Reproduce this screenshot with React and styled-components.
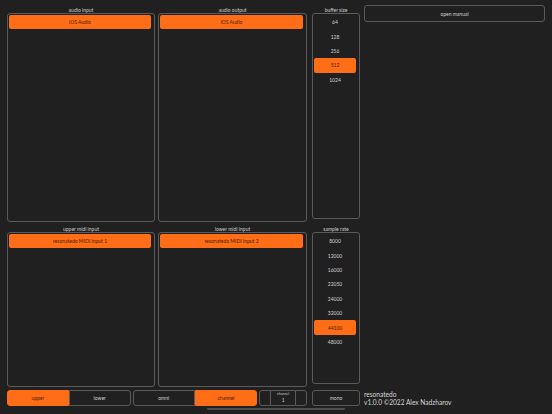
import React from 'react';
import styled, { createGlobalStyle } from 'styled-components';

const GlobalStyle = createGlobalStyle`
  html, body {
    margin: 0;
    padding: 0;
    background: #202020;
  }
  body {
    font-family: Lato, "Open Sans", sans-serif;
    color: #c9c9c9;
  }
`;

const ORANGE = '#ff6d17';
const LINE = '#5b5b5b';

// columns: audio in | gap | audio out | gap | buffer/sample | gap | side
const Screen = styled.div`
  position: relative;
  width: 552px;
  height: 414px;
  overflow: hidden;
  box-sizing: border-box;
  padding: 6px 7px 0 7px;
  display: grid;
  grid-template-columns: 148px 3px 149px 5px 48px 4px 181px;
  grid-template-rows: 216px 162px 16px;
  row-gap: 3px;
  background: #202020;
`;

const Panel = styled.div`
  grid-column: ${p => p.$col};
  display: flex;
  flex-direction: column;
  min-height: 0;
  padding-bottom: ${p => (p.$short ? '3px' : '0')};
`;

const Label = styled.div`
  height: 7px;
  line-height: 8px;
  font-size: 5px;
  text-align: center;
  color: #cfcfcf;
`;

const Box = styled.div`
  flex: 1;
  border: 1px solid ${LINE};
  border-radius: 3px;
  padding: 1px 3px 1px 1px;
  display: flex;
  flex-direction: column;
`;

const Item = styled.div`
  height: ${p => (p.$tall ? '14px' : '14.4px')};
  flex-shrink: 0;
  display: flex;
  align-items: center;
  justify-content: center;
  font-size: 5px;
  border-radius: 2px;
  background: ${p => (p.$active ? ORANGE : 'transparent')};
  color: ${p => (p.$active ? '#4a2308' : '#d0d0d0')};
`;

const SideColumn = styled.div`
  grid-row: 1 / 3;
  grid-column: 7;
`;

const OutlineButton = styled.div`
  box-sizing: border-box;
  height: ${p => p.$h || '16px'};
  border: 1px solid ${LINE};
  border-radius: 3px;
  display: flex;
  align-items: center;
  justify-content: center;
  font-size: 5px;
  color: #d0d0d0;
`;

const ManualButton = styled(OutlineButton)`
  margin-top: -1px;
`;

const MonoButton = styled(OutlineButton)`
  grid-column: 5;
`;

const BottomBar = styled.div`
  grid-column: 1 / 4;
  display: flex;
  gap: 2px;
`;

const Segmented = styled.div`
  width: ${p => p.$w}px;
  display: flex;
`;

const Segment = styled.div`
  flex: 1;
  box-sizing: border-box;
  display: flex;
  align-items: center;
  justify-content: center;
  font-size: 5px;
  border: 1px solid ${p => (p.$active ? ORANGE : LINE)};
  background: ${p => (p.$active ? ORANGE : 'transparent')};
  color: ${p => (p.$active ? '#4a2308' : '#d0d0d0')};
  &:first-child {
    border-radius: 3px 0 0 3px;
  }
  &:last-child {
    border-radius: 0 3px 3px 0;
  }
`;

const Stepper = styled.div`
  width: 48px;
  display: flex;
`;

const StepButton = styled.div`
  width: 12px;
  box-sizing: border-box;
  border: 1px solid ${LINE};
  border-radius: ${p => (p.$side === 'left' ? '3px 0 0 3px' : '0 3px 3px 0')};
`;

const StepValue = styled.div`
  flex: 1;
  box-sizing: border-box;
  border-top: 1px solid ${LINE};
  border-bottom: 1px solid ${LINE};
  display: flex;
  flex-direction: column;
  align-items: center;
  justify-content: center;
  gap: 2px;
  color: #d0d0d0;
`;

const Tiny = styled.span`
  font-size: 3.5px;
  line-height: 3px;
`;

const Value = styled.span`
  font-size: 5px;
  line-height: 5px;
`;

const Credits = styled.div`
  grid-column: 7;
  font-family: Lato, sans-serif;
  font-size: 6.6px;
  line-height: 8px;
  color: #d6d6d6;
  display: flex;
  flex-direction: column;
  justify-content: center;
`;

const HomeIndicator = styled.div`
  position: absolute;
  left: 207px;
  bottom: 4px;
  width: 138px;
  height: 2px;
  border-radius: 1px;
  background: #4e4e4e;
`;

const bufferSizes = [64, 128, 256, 512, 1024];
const sampleRates = [8000, 12000, 16000, 22050, 24000, 32000, 44100, 48000];

function ListPanel({ label, items, active, short, col }) {
  return (
    <Panel $short={short} $col={col}>
      <Label>{label}</Label>
      <Box>
        {items.map(v => (
          <Item key={v} $active={v === active} $tall={!short}>
            {v}
          </Item>
        ))}
      </Box>
    </Panel>
  );
}

export default function App() {
  return (
    <>
      <GlobalStyle />
      <Screen>
        <ListPanel col={1} label="audio input" items={['iOS Audio']} active="iOS Audio" />
        <ListPanel col={3} label="audio output" items={['iOS Audio']} active="iOS Audio" />
        <ListPanel col={5} label="buffer size" items={bufferSizes} active={512} short />
        <SideColumn>
          <ManualButton $h="17px">open manual</ManualButton>
        </SideColumn>

        <ListPanel
          col={1}
          label="upper midi input"
          items={['resonatedo MIDI Input 1']}
          active="resonatedo MIDI Input 1"
        />
        <ListPanel
          col={3}
          label="lower midi input"
          items={['resonatedo MIDI Input 2']}
          active="resonatedo MIDI Input 2"
        />
        <ListPanel col={5} label="sample rate" items={sampleRates} active={44100} short />

        <BottomBar>
          <Segmented $w={124}>
            <Segment $active>upper</Segment>
            <Segment>lower</Segment>
          </Segmented>
          <Segmented $w={125}>
            <Segment>omni</Segment>
            <Segment $active>channel</Segment>
          </Segmented>
          <Stepper>
            <StepButton $side="left" />
            <StepValue>
              <Tiny>channel</Tiny>
              <Value>1</Value>
            </StepValue>
            <StepButton $side="right" />
          </Stepper>
        </BottomBar>
        <MonoButton>mono</MonoButton>
        <Credits>
          <span>resonatedo</span>
          <span>v1.0.0 ©2022 Alex Nadzharov</span>
        </Credits>
        <HomeIndicator />
      </Screen>
    </>
  );
}
